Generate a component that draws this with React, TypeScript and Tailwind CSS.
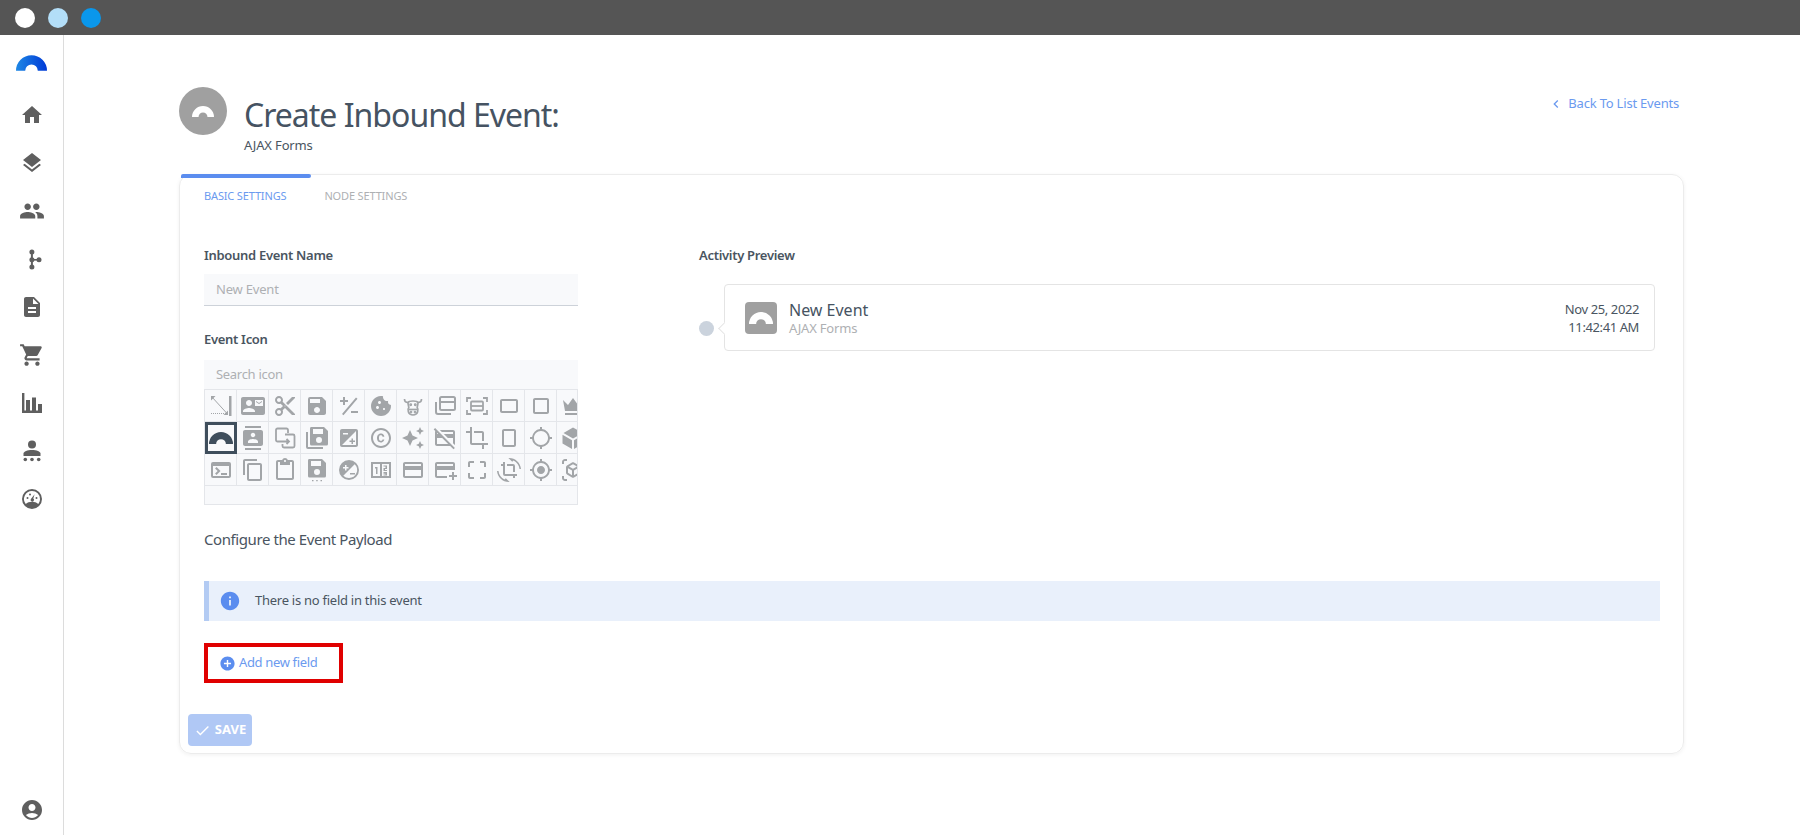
import { FC, ReactNode } from "react";
import { IconType } from "react-icons";
import {
  MdAccountCircle,
  MdAddCard,
  MdAddCircle,
  MdAutoAwesome,
  MdCheck,
  MdChevronLeft,
  MdContactMail,
  MdContacts,
  MdContentCut,
  MdCookie,
  MdDescription,
  MdExposure,
  MdHome,
  MdInfo,
  MdLayers,
  MdOutlineContentCopy,
  MdOutlineContentPaste,
  MdOutlineCopyright,
  MdOutlineCreditCard,
  MdOutlineCreditCardOff,
  MdOutlineCrop,
  MdOutlineCrop75,
  MdOutlineCropFree,
  MdOutlineCropPortrait,
  MdOutlineCropRotate,
  MdOutlineCropSquare,
  MdOutlineGpsFixed,
  MdOutlineGpsNotFixed,
  MdOutlineViewInAr,
  MdPeople,
  MdSave,
  MdShoppingCart,
  MdTerminal,
} from "react-icons/md";

const ARCH_PATH = "M0 16A16 16 0 0 1 32 16H22.500A6.500 6.500 0 0 0 9.500 16Z";

const Arch: FC<{ className?: string }> = ({ className }) => (
  <svg viewBox="0 0 32 16" className={className} fill="currentColor">
    <path d={ARCH_PATH} />
  </svg>
);

const Logo = () => (
  <svg viewBox="0 0 32 16" className="w-[31px] h-4">
    <defs>
      <linearGradient id="logo" x1="0" x2="1" y1="0" y2="0">
        <stop offset="0" stopColor="#1e88e5" />
        <stop offset="1" stopColor="#0039d6" />
      </linearGradient>
    </defs>
    <path d={ARCH_PATH} fill="url(#logo)" />
  </svg>
);

const BranchIcon = () => (
  <svg viewBox="0 0 24 24" className="w-6 h-6" fill="#5f5f5f">
    <path d="M10.900 5h2v14h-2z" />
    <path d="M12 12h6v1.600h-6z" />
    <circle cx="11.900" cy="5" r="2.500" />
    <circle cx="11.900" cy="12.800" r="2.500" />
    <circle cx="11.900" cy="20" r="2.500" />
    <circle cx="19" cy="12.800" r="2.500" />
  </svg>
);

const BarsIcon = () => (
  <svg viewBox="0 0 24 24" className="w-6 h-6" fill="#5f5f5f">
    <path d="M2 2h2.400v17.400H6V9h4v10.400h2V6.500h4v12.900h2V13h4v9H2z" />
  </svg>
);

const GroupIcon = () => (
  <svg viewBox="0 0 24 24" className="w-6 h-6" fill="#5f5f5f">
    <circle cx="12" cy="5.500" r="4" />
    <path d="M3.500 17v-2.500c0-2 4-3.600 8.500-3.600s8.500 1.600 8.500 3.600V17z" />
    <circle cx="5.300" cy="20.500" r="1.800" />
    <circle cx="12" cy="20.500" r="1.800" />
    <circle cx="18.700" cy="20.500" r="1.800" />
  </svg>
);

const GaugeIcon = () => (
  <svg viewBox="0 0 24 24" className="w-6 h-6" fill="#5f5f5f">
    <path
      fillRule="evenodd"
      d="M12 2a10 10 0 1 0 0 20 10 10 0 0 0 0-20Zm0 2a8 8 0 0 1 8 8c0 1.900-.7 3.700-1.800 5-1.500-1.400-3.700-2.300-6.200-2.300S7.300 15.600 5.800 17A8 8 0 0 1 12 4Z"
    />
    <path d="m14.600 7.200-1.300 4.400a1.700 1.700 0 1 1-2.400.4Z" />
    <circle cx="7.500" cy="11" r="1" />
    <circle cx="10" cy="7.500" r="1" />
    <circle cx="16.500" cy="11" r="1" />
  </svg>
);

const MeasureIcon = () => (
  <svg viewBox="0 0 24 24" className="w-6 h-6" fill="currentColor">
    <path d="M20 2h2.500v20H20z" />
    <path d="M2.500 2.500 18.500 20" stroke="currentColor" strokeWidth="1" fill="none" />
    <path d="M2 2h4.500L2 6.500ZM19 21h-4.500l4.500-4.500Z" />
    <path d="M2 19.500h16" stroke="currentColor" strokeWidth="1" strokeDasharray="1 1" fill="none" />
  </svg>
);

const PlusMinusIcon = () => (
  <svg viewBox="0 0 24 24" className="w-6 h-6" fill="currentColor">
    <path d="M3 6h3V3h2v3h3v2H8v3H6V8H3ZM14 17h7v2h-7ZM5 20 19 3.500l1.500 1.300L6.500 21.300Z" />
  </svg>
);

const CowIcon = () => (
  <svg viewBox="0 0 24 24" className="w-6 h-6" fill="none" stroke="currentColor" strokeWidth="1.700">
    <path d="M3.500 5c0 2.500 1.500 3.500 3.500 3.500M20.500 5c0 2.500-1.500 3.500-3.500 3.500" />
    <path d="M7 8.500c0 2.500.8 3.500.8 5C6.500 15 6.500 21 12 21s5.500-6 4.200-7.500c0-1.500.8-2.500.8-5-1-2-9-2-10 0Z" />
    <path d="M8 15.500h8" />
    <circle cx="9.700" cy="10.800" r=".6" fill="currentColor" />
    <circle cx="14.300" cy="10.800" r=".6" fill="currentColor" />
    <circle cx="10" cy="18" r=".5" fill="currentColor" />
    <circle cx="14" cy="18" r=".5" fill="currentColor" />
  </svg>
);

const FeedIcon = () => (
  <svg viewBox="0 0 24 24" className="w-6 h-6" fill="none" stroke="currentColor" strokeWidth="2">
    <rect x="7" y="3" width="15" height="13" rx="1.500" />
    <path d="M7 8h15M3 8v10a2 2 0 0 0 2 2h13" />
  </svg>
);

const FitBoxIcon = () => (
  <svg viewBox="0 0 24 24" className="w-6 h-6" fill="none" stroke="currentColor" strokeWidth="1.800">
    <path d="M2 8V4h4M18 4h4v4M22 16v4h-4M6 20H2v-4" />
    <rect x="6" y="7.500" width="12" height="9" rx="1" />
    <path d="M6 12h12" />
  </svg>
);

const CrownIcon = () => (
  <svg viewBox="0 0 24 24" className="w-6 h-6" fill="currentColor">
    <path d="M2 6 7 11l5-7 5 7 5-5-2 11H4ZM4 19h16v2H4Z" />
  </svg>
);

const CopyArrowIcon = () => (
  <svg viewBox="0 0 24 24" className="w-6 h-6" fill="none" stroke="currentColor" strokeWidth="1.800">
    <path d="M15 7V4a1.500 1.500 0 0 0-1.500-1.500h-9A1.500 1.500 0 0 0 3 4v10a1.500 1.500 0 0 0 1.500 1.500H8" />
    <path d="M12 8.500h8a1.500 1.500 0 0 1 1.500 1.500v10a1.500 1.500 0 0 1-1.500 1.500h-9A1.500 1.500 0 0 1 9.500 20v-2" />
    <path d="M8 15.500h8m-2.500-2.500 2.500 2.500-2.500 2.500" />
  </svg>
);

const CubeFilledIcon = () => (
  <svg viewBox="0 0 24 24" className="w-6 h-6" fill="currentColor">
    <path d="M12 1.500 21.500 7 12 12.500 2.500 7ZM1.500 8.800 11 14.300V23l-9.500-5.500ZM13 14.300l9.500-5.500v8.700L13 23Z" />
  </svg>
);

const CircleExposureIcon = () => (
  <svg viewBox="0 0 24 24" className="w-6 h-6" fill="currentColor">
    <path d="M12 2a10 10 0 1 0 0 20 10 10 0 0 0 0-20ZM6 9h2V7h1.500v2h2v1.500h-2v2H8v-2H6Zm6 11a8 8 0 0 1-5.700-2.300L17.700 6.300A8 8 0 0 1 12 20Zm1-5h5v1.500h-5Z" />
  </svg>
);

const FractionIcon = () => (
  <svg viewBox="0 0 24 24" className="w-6 h-6" fill="currentColor">
    <path d="M2 4h20v16H2Zm2 2v12h7V6Zm9 0v12h7V6Z" fillRule="evenodd" />
    <path d="M6 9h2.500v7H7v-5.500H6ZM14.500 7.500H18V11h-2v1h2v1h-3.500v-3h2V8.500h-2Zm0 6.500H18v3.500h-3.500v-1h2V16h-2v-.8h2V15h-2Z" />
  </svg>
);

const SaveDotsIcon = () => (
  <svg viewBox="0 0 24 24" className="w-6 h-6" fill="currentColor">
    <path
      fillRule="evenodd"
      d="M4 1h13l4 4v13a1.500 1.500 0 0 1-1.500 1.500h-15A1.500 1.500 0 0 1 3 18V2.500A1.500 1.500 0 0 1 4 1Zm2 2v5h10V3Zm6 8a3 3 0 1 0 0 6 3 3 0 0 0 0-6Z"
    />
    <path d="M7 22h1.500v1.200H7zM11.200 22h1.500v1.200h-1.500zM15.500 22H17v1.200h-1.500z" />
  </svg>
);

const SaveStackIcon = () => (
  <svg viewBox="0 0 24 24" className="w-6 h-6" fill="currentColor">
    <path d="M1 6h2v15h15v2H3a2 2 0 0 1-2-2Z" />
    <path
      fillRule="evenodd"
      d="M6 1h13l4 4v13a1.500 1.500 0 0 1-1.500 1.500H6.500A1.500 1.500 0 0 1 5 18V2.500A1.500 1.500 0 0 1 6 1Zm2 2v5h10V3Zm6 8a3 3 0 1 0 0 6 3 3 0 0 0 0-6Z"
    />
  </svg>
);

const ICON_ROWS: (IconType | FC)[][] = [
  [
    MeasureIcon,
    MdContactMail,
    MdContentCut,
    MdSave,
    PlusMinusIcon,
    MdCookie,
    CowIcon,
    FeedIcon,
    FitBoxIcon,
    MdOutlineCrop75,
    MdOutlineCropSquare,
    CrownIcon,
  ],
  [
    Arch,
    MdContacts,
    CopyArrowIcon,
    SaveStackIcon,
    MdExposure,
    MdOutlineCopyright,
    MdAutoAwesome,
    MdOutlineCreditCardOff,
    MdOutlineCrop,
    MdOutlineCropPortrait,
    MdOutlineGpsNotFixed,
    CubeFilledIcon,
  ],
  [
    MdTerminal,
    MdOutlineContentCopy,
    MdOutlineContentPaste,
    SaveDotsIcon,
    CircleExposureIcon,
    FractionIcon,
    MdOutlineCreditCard,
    MdAddCard,
    MdOutlineCropFree,
    MdOutlineCropRotate,
    MdOutlineGpsFixed,
    MdOutlineViewInAr,
  ],
];

const NavItem: FC<{ children: ReactNode }> = ({ children }) => (
  <div className="h-12 flex items-center justify-center text-[#5f5f5f]">
    {children}
  </div>
);

const Sidebar = () => (
  <aside className="w-[64px] shrink-0 border-r-[1px] border-[#dcdcdc] flex flex-col items-stretch">
    <div className="h-[36px] mt-[10px] flex items-center justify-center">
      <Logo />
    </div>
    <div className="mt-[10px]">
      <NavItem><MdHome size={24} /></NavItem>
      <NavItem><MdLayers size={24} /></NavItem>
      <NavItem><MdPeople size={26} /></NavItem>
      <NavItem><BranchIcon /></NavItem>
      <NavItem><MdDescription size={24} /></NavItem>
      <NavItem><MdShoppingCart size={26} /></NavItem>
      <NavItem><BarsIcon /></NavItem>
      <NavItem><GroupIcon /></NavItem>
      <NavItem><GaugeIcon /></NavItem>
    </div>
    <div className="mt-auto mb-[1px]">
      <NavItem><MdAccountCircle size={24} /></NavItem>
    </div>
  </aside>
);

const IconPicker = () => (
  <div className="h-[115px] overflow-hidden border border-t-0 border-[#e4e6ea] bg-[#f8f9fb]">
    {ICON_ROWS.map((row, rowIdx) => (
      <div key={rowIdx} className="flex w-[400px]">
        {row.map((Icon, idx) => {
          const selected = rowIdx === 1 && idx === 0;

          return (
            <div
              key={idx}
              className={
                selected
                  ? "w-8 h-8 shrink-0 flex items-center justify-center border-[3px] border-[#3f4e5c] text-[#3f4e5c]"
                  : "w-8 h-8 shrink-0 flex items-center justify-center border-r border-b border-[#e4e6ea] text-[#a2a5a8] text-2xl"
              }
            >
              {selected ? <Arch className="w-6 h-3" /> : <Icon />}
            </div>
          );
        })}
      </div>
    ))}
  </div>
);

export default function App() {
  return (
    <div className="w-[1800px] h-[835px] overflow-hidden flex flex-col bg-white font-['Noto_Sans',sans-serif] text-[#4a5561]">
      <div className="h-[35px] shrink-0 bg-[#555555] flex items-center gap-[13px] pl-[15px]">
        <span className="w-5 h-5 rounded-full bg-white" />
        <span className="w-5 h-5 rounded-full bg-[#b3def8]" />
        <span className="w-5 h-5 rounded-full bg-[#0a97eb]" />
      </div>

      <div className="flex flex-1 min-h-0">
        <Sidebar />

        <main className="flex-1 pl-[115px] pt-[52px]">
          <div className="flex w-[1504px] h-[87px]">
            <div className="w-12 h-12 rounded-full bg-[#a0a0a0] flex items-center justify-center text-white">
              <Arch className="w-[22px] h-[11px]" />
            </div>
            <div className="ml-[17px] flex-1 pt-[6px]">
              <h1 className="text-[32px] leading-[44px] tracking-[-1px] text-[#465362]">Create Inbound Event:</h1>
              <p className="text-[13px] leading-[16px] tracking-[-0.15px]">AJAX Forms</p>
            </div>
            <a className="flex items-center self-start h-5 mt-[7px] mr-[4px] text-[13px] tracking-[-0.2px] text-[#6b9aef]">
              <MdChevronLeft size={16} className="mr-[4px]" />
              Back To List Events
            </a>
          </div>

          <section className="relative w-[1505px] h-[580px] border border-[#ececec] rounded-xl shadow-[0_1px_4px_rgba(0,0,0,0.06)]">
            <div className="absolute -top-px left-px w-[130px] h-1 rounded-t-sm rounded-br-sm bg-[#5b8def]" />

            <div className="flex gap-[38px] pl-[24px] pt-[13px] text-[11px] leading-[16px] tracking-[-0.15px] uppercase">
              <span className="text-[#6b9aef]">Basic Settings</span>
              <span className="text-[#aeb0b3]">Node Settings</span>
            </div>

            <div className="flex pl-[24px] mt-[42px]">
              <div className="w-[374px]">
                <label className="block text-[13px] leading-[18px] tracking-[-0.3px] font-semibold">Inbound Event Name</label>
                <div className="mt-[10px] h-[32px] px-3 pt-px flex items-center bg-[#f8f9fb] border-b border-[#cdd2d9] text-[13px] tracking-[-0.2px] text-[#aeb0b3]">
                  New Event
                </div>

                <label className="block mt-[24px] text-[13px] leading-[18px] tracking-[-0.3px] font-semibold">Event Icon</label>
                <div className="mt-[12px] h-[30px] px-3 flex items-center bg-[#f8f9fb] border-b border-[#e4e6ea] text-[13px] tracking-[-0.3px] text-[#aeb0b3]">
                  Search icon
                </div>
                <IconPicker />
              </div>

              <div className="ml-[121px] flex-1">
                <label className="block text-[13px] leading-[18px] tracking-[-0.3px] font-semibold">Activity Preview</label>
                <div className="relative mt-[20px] ml-[25px] w-[931px] h-[67px] border border-[#e4e4e4] rounded-sm flex items-center pl-5 pr-[15px]">
                  <span className="absolute left-[-26px] top-[36px] w-[15px] h-[15px] rounded-full bg-[#cbd3dd]" />
                  <span className="absolute left-[-5px] top-[39px] w-[9px] h-[9px] rotate-45 bg-white border-l border-b border-[#e4e4e4]" />
                  <div className="w-8 h-8 rounded bg-[#a0a0a0] flex items-center justify-center text-white">
                    <Arch className="w-[24px] h-[12px]" />
                  </div>
                  <div className="ml-[12px] flex-1">
                    <p className="text-[16px] leading-[20px] text-[#465362]">New Event</p>
                    <p className="text-[13px] leading-[16px] tracking-[-0.2px] text-[#aeb0b3]">AJAX Forms</p>
                  </div>
                  <div className="text-right text-[13px] leading-[18px] tracking-[-0.4px]">
                    <p>Nov 25, 2022</p>
                    <p>11:42:41 AM</p>
                  </div>
                </div>
              </div>
            </div>

            <div className="pl-[24px]">
              <h3 className="mt-[23px] text-[15px] leading-[22px] tracking-[-0.42px]">Configure the Event Payload</h3>

              <div className="mt-[31px] w-[1456px] h-[40px] flex items-center bg-[#e9f0fb] border-l-[5px] border-[#b3cbf3] text-[13px] tracking-[-0.26px]">
                <MdInfo size={22} className="ml-[10px] text-[#5b8def]" />
                <span className="ml-[14px]">There is no field in this event</span>
              </div>

              <button className="mt-[22px] w-[139px] h-[40px] flex items-center border-[4px] border-[#e00000] pl-[11px] text-[13px] tracking-[-0.35px] text-[#6b9aef]">
                <MdAddCircle size={17} className="text-[#5b8def] mr-[3px]" />
                Add new field
              </button>

              <button className="mt-[31px] -ml-[16px] w-[64px] h-[32px] flex items-center justify-center gap-[4px] rounded-sm bg-[#b0c8f5] text-white text-[13px] font-bold">
                <MdCheck size={17} />
                SAVE
              </button>
            </div>
          </section>
        </main>
      </div>
    </div>
  );
}
